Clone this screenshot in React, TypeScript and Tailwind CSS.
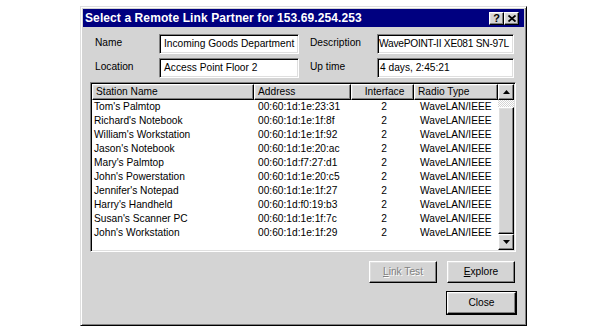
import React from "react";

const raised =
  "border border-t-white border-l-white border-r-black border-b-black shadow-[inset_-1px_-1px_#808080,inset_1px_1px_#dfdfdf]";
const sunken =
  "border border-t-[#808080] border-l-[#808080] border-r-white border-b-white shadow-[inset_1px_1px_#000,inset_-1px_-1px_#dfdfdf]";

const rows: [string, string][] = [
  ["Tom's Palmtop", "00:60:1d:1e:23:31"],
  ["Richard's Notebook", "00:60:1d:1e:1f:8f"],
  ["William's Workstation", "00:60:1d:1e:1f:92"],
  ["Jason's Notebook", "00:60:1d:1e:20:ac"],
  ["Mary's Palmtop", "00:60:1d:f7:27:d1"],
  ["John's Powerstation", "00:60:1d:1e:20:c5"],
  ["Jennifer's Notepad", "00:60:1d:1e:1f:27"],
  ["Harry's Handheld", "00:60:1d:f0:19:b3"],
  ["Susan's Scanner PC", "00:60:1d:1e:1f:7c"],
  ["John's Workstation", "00:60:1d:1e:1f:29"],
];

function Field({ value, pad = "pl-[4px]" }: { value: string; pad?: string }) {
  return (
    <div className={`h-[20px] bg-white ${sunken} flex items-center ${pad} whitespace-nowrap overflow-hidden`}>
      {value}
    </div>
  );
}

function Header({ label, w, center }: { label: string; w: string; center?: boolean }) {
  return (
    <div className={`${w} h-[16px] ${raised} bg-[#d4d4d4] flex items-center ${center ? "justify-center pl-[4px]" : "pl-[3px]"} whitespace-nowrap overflow-hidden`}>
      {label}
    </div>
  );
}

function Arrow({ up }: { up?: boolean }) {
  return (
    <div className={`w-[16px] h-[16px] ${raised} bg-[#d4d4d4] flex items-center justify-center`}>
      <svg width="7" height="4" viewBox="0 0 7 4">
        {up ? <path d="M3.5 0 L7 4 L0 4 Z" fill="#000" /> : <path d="M0 0 L7 0 L3.5 4 Z" fill="#000" />}
      </svg>
    </div>
  );
}

export default function App() {
  return (
    <div
      className="w-[607px] h-[332px] bg-white pt-[6px] pl-[80px] text-[10.2px] text-black"
      style={{ fontFamily: '"Liberation Sans", Arial, sans-serif' }}
    >
      <div className="w-[447px] h-[320px] bg-[#d4d4d4] border border-t-[#dfdfdf] border-l-[#dfdfdf] border-r-black border-b-black shadow-[inset_1px_1px_#fff,inset_-1px_-1px_#808080] p-[2px] flex flex-col">
        {/* Title bar */}
        <div className="h-[18px] bg-[#000080] flex items-center justify-between pl-[2px] pr-[5px]">
          <span className="text-white font-bold text-[12px] tracking-[0.1px]">
            Select a Remote Link Partner for 153.69.254.253
          </span>
          <div className="flex">
            <div className={`w-[15px] h-[13px] ${raised} bg-[#d4d4d4] flex items-center justify-center font-bold text-[11px] leading-none`}>?</div>
            <div className={`w-[15px] h-[13px] ${raised} bg-[#d4d4d4] flex items-center justify-center`}>
              <svg width="8" height="7" viewBox="0 0 8 7">
                <path d="M0.5 0.5 L7.5 6.5 M7.5 0.5 L0.5 6.5" stroke="#000" strokeWidth="1.8" />
              </svg>
            </div>
          </div>
        </div>

        {/* Content */}
        <div className="flex flex-col pl-[7px] pt-[7px]">
          <div className="flex flex-col gap-[4px] pl-[5px]">
            <div className="flex items-center">
              <div className="w-[64px] -mt-[2px]">Name</div>
              <div className="w-[140px]"><Field value="Incoming Goods Department" /></div>
              <div className="w-[67px] ml-[11px] -mt-[2px]">Description</div>
              <div className="w-[137px] tracking-[-0.25px]"><Field value="WavePOINT-II XE081 SN-97L" pad="pl-[1px]" /></div>
            </div>
            <div className="flex items-center">
              <div className="w-[64px] -mt-[2px]">Location</div>
              <div className="w-[140px]"><Field value="Access Point Floor 2" /></div>
              <div className="w-[67px] ml-[11px] -mt-[2px]">Up time</div>
              <div className="w-[137px]"><Field value="4 days, 2:45:21" pad="pl-[2px]" /></div>
            </div>
          </div>

          {/* List */}
          <div className={`mt-[4px] w-[426px] h-[170px] bg-white ${sunken} p-[1px] flex`}>
            <div className="flex-1 flex flex-col">
              <div className="flex">
                <Header label="Station Name" w="w-[162px]" />
                <Header label="Address" w="w-[97px]" />
                <Header label="Interface" w="w-[63px]" center />
                <Header label="Radio Type" w="w-[84px]" />
              </div>
              {rows.map(([n, a]) => (
                <div key={n} className="flex h-[14px] items-center whitespace-nowrap">
                  <div className="w-[162px] pl-[2px]">{n}</div>
                  <div className="w-[97px] pl-[4px]">{a}</div>
                  <div className="w-[63px] text-center pl-[3px]">2</div>
                  <div className="w-[84px] pl-[6px]">WaveLAN/IEEE</div>
                </div>
              ))}
            </div>
            <div className="w-[16px] flex flex-col">
              <Arrow up />
              <div className="h-[7px] bg-[repeating-conic-gradient(#fff_0_25%,#d4d4d4_0_50%)] bg-[length:2px_2px]" />
              <div className={`flex-1 ${raised} bg-[#d4d4d4]`} />
              <Arrow />
            </div>
          </div>

          {/* Buttons */}
          <div className="flex justify-end gap-[10px] mt-[9px] pr-[1px] w-[426px]">
            <div className={`w-[68px] h-[22px] ${raised} bg-[#d4d4d4] flex items-center justify-center text-[#808080] [text-shadow:1px_1px_0_#fff]`}>
              <span><span className="underline">L</span>ink Test</span>
            </div>
            <div className={`w-[68px] h-[22px] ${raised} bg-[#d4d4d4] flex items-center justify-center`}>
              <span><span className="underline">E</span>xplore</span>
            </div>
          </div>
          <div className="flex justify-end mt-[8px] w-[427px]">
            <div className="w-[71px] h-[24px] border border-black">
              <div className={`w-full h-full ${raised} bg-[#d4d4d4] flex items-center justify-center`}>Close</div>
            </div>
          </div>
        </div>
      </div>
    </div>
  );
}
